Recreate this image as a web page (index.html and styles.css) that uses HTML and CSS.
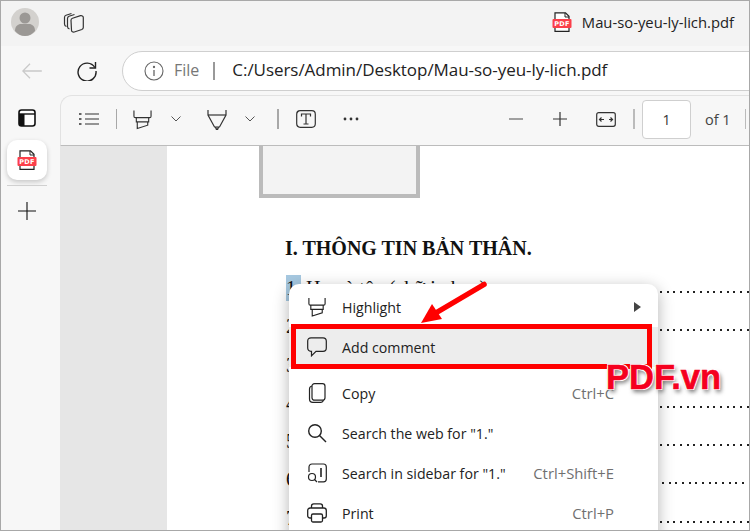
FILE: index.html
```html
<!DOCTYPE html>
<html lang="en">
<head>
    <meta charset="UTF-8">
    <meta name="viewport" content="width=device-width, initial-scale=1.0">
    <title>Mau-so-yeu-ly-lich.pdf</title>
    <link rel="stylesheet" href="styles.css">
</head>
<body>
<div class="window">
    <!-- title bar -->
    <div class="titlebar">
        <svg class="avatar" viewBox="0 0 28 28">
            <circle cx="14" cy="14" r="14" fill="#d3d1ce"/>
            <circle cx="14" cy="10" r="5.5" fill="#9b9895"/>
            <path d="M4 23c0-5 3-7 6-7h8c3 0 6 2 6 7-2.500 3-6 5-10 5s-7.500-2-10-5z" fill="#9b9895"/>
        </svg>
        <svg class="tabs-icon" viewBox="0 0 22 22" fill="none" stroke="#333" stroke-width="1.200">
            <path d="M3.500 15.500c-1.500-.5-2-1.500-2-2.500V6.500c0-1 .5-2 1.500-2.300L8.500 2.500"/>
            <path d="M6.500 18c-1.500-.5-2-1.500-2-2.500V7.500c0-1 .6-1.800 1.500-2.200l5.500-1.800"/>
            <path d="M8 9.200c0-1 .6-1.700 1.500-2l8-2.500c1.200-.3 2.800.3 2.800 1.800v10c0 1-.6 1.600-1.500 2l-7.500 2.500c-1.400.4-2.800-.3-2.800-1.800z"/>
        </svg>
        <div class="tab-title">
            <svg class="pdf-icon" viewBox="0 0 20 20">
                <path d="M3 19.300V.8h10.500l3.500 3.500v15z" fill="#fff" stroke="#222" stroke-width="1.200"/>
                <path d="M13 1v4h4" fill="none" stroke="#222"/>
                <rect x="0.500" y="7" width="19" height="9" rx="1" fill="#fb3f4a"/>
                <text x="10" y="14" class="pdf-icon-text">PDF</text>
            </svg>
            <span>Mau-so-yeu-ly-lich.pdf</span>
        </div>
    </div>

    <!-- address row -->
    <div class="navbar">
        <svg class="back" viewBox="0 0 20 16" fill="none" stroke="#c9c9c9" stroke-width="1.300">
            <path d="M.8 8h19M8 .8.800 8 8 15.200"/>
        </svg>
        <svg class="reload" viewBox="0 0 20 20" fill="none" stroke="#222" stroke-width="1.400">
            <path d="M17.800 6.500A9 9 0 1 0 19 10"/>
            <path d="M18.500 1v6h-6"/>
        </svg>
        <div class="address">
            <svg class="info" viewBox="0 0 20 20" fill="none" stroke="#666" stroke-width="1.100">
                <circle cx="10" cy="10" r="9"/>
                <path d="M10 9v6" stroke-width="1.300"/>
                <circle cx="10" cy="6" r=".6" fill="#666"/>
            </svg>
            <span class="scheme">File</span>
            <span class="address-sep"></span>
            <span class="url">C:/Users/Admin/Desktop/Mau-so-yeu-ly-lich.pdf</span>
        </div>
    </div>

    <div class="main">
        <!-- vertical tabs -->
        <div class="sidebar">
            <svg class="panel-icon" viewBox="0 0 18 18">
                <rect x="1" y="1" width="16" height="16" rx="2.500" fill="#fff" stroke="#111" stroke-width="1.600"/>
                <path d="M1 5h16" stroke="#111" stroke-width="1.400"/>
                <rect x="1" y="5" width="5.500" height="12" fill="#111"/>
            </svg>
            <div class="tab-card">
                <svg class="pdf-icon" viewBox="0 0 20 20">
                    <path d="M3 19.300V.8h10.500l3.500 3.500v15z" fill="#fff" stroke="#222" stroke-width="1.200"/>
                    <path d="M13 1v4h4" fill="none" stroke="#222"/>
                    <rect x="0.500" y="7" width="19" height="9" rx="1" fill="#fb3f4a"/>
                    <text x="10" y="14" class="pdf-icon-text">PDF</text>
                </svg>
            </div>
            <div class="sidebar-sep"></div>
            <svg class="plus-icon" viewBox="0 0 18 18" stroke="#111" stroke-width="1.100">
                <path d="M9 0v18M0 9h18"/>
            </svg>
        </div>

        <div class="content">
            <!-- pdf toolbar -->
            <div class="toolbar">
                <svg class="tool list-icon" viewBox="0 0 20 14" stroke="#333" stroke-width="1.200">
                    <path d="M6 2h14M6 7h14M6 12h14"/>
                    <path d="M0 2h2.500M0 7h2.500M0 12h2.500" stroke-width="1.600"/>
                </svg>
                <span class="tool-sep sep-a"></span>
                <svg class="tool marker-icon" viewBox="0 0 20 21" fill="none" stroke="#333" stroke-width="1.200">
                    <path d="M1 1v6c0 1 .5 1.500 1.500 1.500h15c1 0 1.500-.5 1.500-1.500V1"/>
                    <path d="M3.500 8.500V13h13V8.500"/>
                    <path d="M4.500 13v7l11-3.500V13"/>
                </svg>
                <svg class="tool chevron chevron-a" viewBox="0 0 10 6" fill="none" stroke="#555" stroke-width="1">
                    <path d="M.5.500 5 5 9.500.500"/>
                </svg>
                <svg class="tool pen-icon" viewBox="0 0 20 21" fill="none" stroke="#333" stroke-width="1.200">
                    <path d="M1 1v5l6.500 12h5L19 6V1"/>
                    <path d="M1 6h18"/>
                    <path d="M8.500 18l1 2.500h1l1-2.500" stroke-width="1.400"/>
                </svg>
                <svg class="tool chevron chevron-b" viewBox="0 0 10 6" fill="none" stroke="#555" stroke-width="1">
                    <path d="M.5.500 5 5 9.500.500"/>
                </svg>
                <span class="tool-sep sep-b"></span>
                <svg class="tool text-icon" viewBox="0 0 20 18" fill="none" stroke="#333" stroke-width="1.200">
                    <rect x=".7" y=".7" width="18.600" height="16.600" rx="3.500"/>
                    <path d="M5.500 6.500V4h9v2.500M10 4v10M7.500 14h5"/>
                </svg>
                <svg class="tool dots-icon" viewBox="0 0 16 4" fill="#333">
                    <circle cx="2" cy="2" r="1.400"/><circle cx="8" cy="2" r="1.400"/><circle cx="14" cy="2" r="1.400"/>
                </svg>
                <svg class="tool minus-icon" viewBox="0 0 14 2" stroke="#666" stroke-width="1.200">
                    <path d="M0 1h14"/>
                </svg>
                <svg class="tool zoomin-icon" viewBox="0 0 14 14" stroke="#333" stroke-width="1.200">
                    <path d="M7 0v14M0 7h14"/>
                </svg>
                <svg class="tool fit-icon" viewBox="0 0 20 15" fill="none" stroke="#333" stroke-width="1.200">
                    <rect x=".7" y=".7" width="18.600" height="13.600" rx="2"/>
                    <path d="M3.500 7.500h4.500M13 7.500h4M5.500 5.500l-2 2 2 2M14.500 5.500l2 2-2 2"/>
                </svg>
                <span class="tool-sep sep-c"></span>
                <div class="page-input">1</div>
                <span class="page-total">of 1</span>
                <span class="tool-sep sep-d"></span>
            </div>

            <div class="viewer">
                <div class="viewer-gutter"></div>
                <div class="page">
                    <div class="photo-box"></div>
                    <h2 class="section-title">I. THÔNG TIN BẢN THÂN.</h2>
                    <div class="row"><span><span class="selected">1.</span> Họ và tên (chữ in hoa)</span><span class="leader"></span></div>
                    <div class="row"><span>2. Ngày sinh</span><span class="leader"></span></div>
                    <div class="row"><span>3. Giới tính</span></div>
                    <div class="row"><span>4. Nơi sinh</span><span class="leader"></span></div>
                    <div class="row"><span>5. Quê quán</span><span class="leader"></span></div>
                    <div class="row"><span>6. Dân tộc</span><span class="leader shifted"></span></div>
                    <div class="row"><span>7. Tôn giáo</span><span class="leader"></span></div>
                </div>
            </div>
        </div>
    </div>

    <!-- right click menu -->
    <div class="context-menu">
        <div class="menu-item">
            <svg class="menu-icon" viewBox="0 0 20 21" fill="none" stroke="#222" stroke-width="1.200">
                <path d="M1.500 1v6c0 1 .5 1.500 1.500 1.500h14c1 0 1.500-.5 1.500-1.500V1"/>
                <path d="M3.500 8.500V13h13V8.500"/>
                <path d="M5 13v7l10.500-3.500V13"/>
            </svg>
            <span class="menu-label">Highlight</span>
            <svg class="submenu-arrow" viewBox="0 0 7 10" fill="#444"><path d="M0 0l7 5-7 5z"/></svg>
        </div>
        <div class="menu-item hovered">
            <svg class="menu-icon" viewBox="0 0 20 20" fill="none" stroke="#222" stroke-width="1.200">
                <path d="M4 .8h12c2 0 3.300 1.300 3.300 3.200v7c0 2-1.300 3.300-3.300 3.300H9l-4.500 4.500v-4.500H4C2 14.300.7 13 .7 11V4C.7 2.100 2 .8 4 .8z"/>
            </svg>
            <span class="menu-label">Add comment</span>
        </div>
        <div class="menu-gap"></div>
        <div class="menu-item">
            <svg class="menu-icon" viewBox="0 0 20 20" fill="none" stroke="#222" stroke-width="1.200">
                <rect x="5" y=".7" width="13" height="16.500" rx="2.500"/>
                <path d="M5 3C3 3.500 2.500 4.500 2.500 6v10c0 2 1.500 3.300 3.300 3.300H14c1 0 2-.5 2.500-2"/>
            </svg>
            <span class="menu-label">Copy</span>
            <span class="shortcut">Ctrl+C</span>
        </div>
        <div class="menu-item">
            <svg class="menu-icon" viewBox="0 0 20 20" fill="none" stroke="#222" stroke-width="1.400">
                <circle cx="8" cy="8" r="6.300"/>
                <path d="M12.500 12.500l6.500 6.500"/>
            </svg>
            <span class="menu-label">Search the web for "1."</span>
        </div>
        <div class="menu-item">
            <svg class="menu-icon" viewBox="0 0 20 20" fill="none" stroke="#222" stroke-width="1.200">
                <path d="M2 9V4c0-1.800 1.200-3 3-3h11.500c1.500 0 2.800 1.200 2.800 3v12c0 1.500-1.300 2.800-2.800 2.800H11"/>
                <path d="M14 5v9" stroke-width="1.600"/>
                <circle cx="5" cy="14" r="3.500"/>
                <path d="M7.500 16.500L10 19"/>
            </svg>
            <span class="menu-label">Search in sidebar for "1."</span>
            <span class="shortcut">Ctrl+Shift+E</span>
        </div>
        <div class="menu-item">
            <svg class="menu-icon" viewBox="0 0 20 20" fill="none" stroke="#222" stroke-width="1.300">
                <path d="M4.500 5V3c0-1.300 1-2.200 2.200-2.200h6.600c1.200 0 2.200.9 2.200 2.200v2"/>
                <path d="M4.500 15H3c-1.300 0-2.300-1-2.300-2.300V7.500C.7 6 1.700 5 3.200 5h13.600c1.500 0 2.500 1 2.500 2.500v5.200c0 1.300-1 2.300-2.300 2.300h-1.500"/>
                <rect x="4.500" y="11" width="11" height="8" rx="1.500"/>
            </svg>
            <span class="menu-label">Print</span>
            <span class="shortcut">Ctrl+P</span>
        </div>
    </div>

    <!-- red annotations on top of the screenshot -->
    <div class="red-box"></div>
    <svg class="red-arrow" viewBox="0 0 70 44">
        <path d="M64 3.500 14 33" fill="none" stroke="#f00" stroke-width="5.500" stroke-linecap="round"/>
        <path d="M1 42l11-19 10 15z" fill="#f00"/>
    </svg>
    <div class="watermark">PDF.vn</div>
</div>
</body>
</html>
```

FILE: styles.css
```css
* {
    margin: 0;
    padding: 0;
    box-sizing: border-box;
}
body {
    width: 750px;
    height: 532px;
    overflow: hidden;
    background-color: #ffffff;
    font-family: "Open Sans", "Noto Sans", Arial, sans-serif;
}
svg {
    display: block;
    flex: none;
}
.window {
    position: relative;
    width: 750px;
    height: 531px;
    border: 1px solid #a8a8a8;
    overflow: hidden;
    background-color: #f7f7f7;
    display: flex;
    flex-direction: column;
}

/* title bar */
.titlebar {
    height: 45px;
    flex: none;
    background-color: #f3f3f3;
    display: flex;
    align-items: center;
    padding-left: 10px;
}
.avatar {
    width: 28px;
    height: 28px;
    margin-top: -3px;
}
.tabs-icon {
    width: 22px;
    height: 22px;
    margin-left: 24px;
    margin-top: -3px;
}
.tab-title {
    margin-left: auto;
    padding-right: 15px;
    display: flex;
    align-items: center;
    gap: 10px;
    font-size: 14.800px;
    color: #222;
    margin-top: -3px;
}
.pdf-icon {
    width: 20px;
    height: 20px;
}
.pdf-icon-text {
    font-family: "DejaVu Sans", sans-serif;
    font-size: 6.500px;
    font-weight: bold;
    fill: #ffffff;
    text-anchor: middle;
    letter-spacing: .3px;
}

/* address row */
.navbar {
    height: 49px;
    flex: none;
    display: flex;
    align-items: center;
    padding-left: 21px;
    background-color: #f7f7f7;
}
.back {
    width: 20px;
    height: 16px;
}
.reload {
    width: 20px;
    height: 20px;
    margin-left: 35px;
}
.address {
    margin-left: 25px;
    flex: 1;
    height: 40px;
    margin-right: -30px;
    background-color: #ffffff;
    border: 1px solid #cfcfcf;
    border-radius: 20px;
    display: flex;
    align-items: center;
    padding-left: 21px;
}
.info {
    width: 20px;
    height: 20px;
}
.scheme {
    margin-left: 10px;
    font-size: 16px;
    line-height: 20px;
    color: #777;
    margin-top: -2px;
}
.address-sep {
    width: 2px;
    height: 18px;
    background-color: #999;
    margin-left: 14px;
}
.url {
    margin-left: 17px;
    font-size: 17px;
    line-height: 20px;
    letter-spacing: -0.050px;
    color: #222;
    white-space: nowrap;
    margin-top: -2px;
}

.main {
    flex: 1;
    display: flex;
    min-height: 0;
}

/* vertical tabs */
.sidebar {
    width: 59px;
    flex: none;
    display: flex;
    flex-direction: column;
    align-items: center;
    padding-top: 14px;
    padding-right: 8px;
}
.panel-icon {
    width: 18px;
    height: 18px;
}
.tab-card {
    width: 40px;
    height: 40px;
    margin-top: 13px;
    background-color: #ffffff;
    border-radius: 10px;
    box-shadow: 0 2px 5px rgba(0, 0, 0, 0.2);
    display: flex;
    align-items: center;
    justify-content: center;
}
.sidebar-sep {
    width: 40px;
    height: 1px;
    margin-top: 5px;
    background-color: #d0d0d0;
}
.plus-icon {
    width: 18px;
    height: 18px;
    margin-top: 16px;
}

.content {
    flex: 1;
    min-width: 0;
    display: flex;
    flex-direction: column;
}

/* pdf toolbar */
.toolbar {
    height: 51px;
    flex: none;
    display: flex;
    align-items: center;
    background-color: #f7f7f7;
    border-top: 1px solid #e2e2e2;
    border-left: 1px solid #e2e2e2;
    border-bottom: 1px solid #bcbcbc;
    border-top-left-radius: 12px;
    padding-left: 18px;
}
.tool {
    margin-top: -3px;
}
.list-icon { width: 20px; height: 14px; }
.tool-sep {
    flex: none;
    width: 1px;
    height: 20px;
    margin-top: -3px;
    background-color: #a8a8a8;
}
.sep-a { margin-left: 17px; }
.marker-icon { width: 19px; height: 21px; margin-left: 16px; }
.chevron { width: 10px; height: 6px; }
.chevron-a { margin-left: 19px; }
.pen-icon { width: 20px; height: 21px; margin-left: 26px; }
.chevron-b { margin-left: 18px; }
.sep-b { margin-left: 22px; width: 2px; }
.text-icon { width: 20px; height: 18px; margin-left: 17px; }
.dots-icon { width: 16px; height: 4px; margin-left: 27px; }
.minus-icon { width: 14px; height: 2px; margin-left: 150px; }
.zoomin-icon { width: 14px; height: 14px; margin-left: 30px; }
.fit-icon { width: 20px; height: 15px; margin-left: 29px; }
.sep-c { margin-left: 17px; width: 2px; background-color: #bbb; }
.page-input {
    width: 49px;
    height: 39px;
    flex: none;
    margin-left: 7px;
    margin-top: -3px;
    background-color: #ffffff;
    border: 1px solid #cfcfcf;
    border-radius: 4px;
    display: flex;
    align-items: center;
    justify-content: center;
    font-size: 14px;
    color: #333;
}
.page-total {
    margin-left: 14px;
    margin-top: -3px;
    font-size: 14.500px;
    color: #444;
    white-space: nowrap;
}
.sep-d { margin-left: 14px; background-color: #bbb; }

/* document */
.viewer {
    flex: 1;
    display: flex;
    min-height: 0;
}
.viewer-gutter {
    width: 107px;
    flex: none;
    background-color: #e6e6e6;
}
.page {
    flex: 1;
    min-width: 0;
    overflow: hidden;
    background-color: #ffffff;
    padding-left: 119px;
    font-family: "Liberation Serif", "Times New Roman", serif;
    color: #111;
}
.photo-box {
    width: 161px;
    height: 52px;
    margin-left: -27px;
    background-color: #f3f3f3;
    border: 4px solid #bbbbbb;
    border-top: none;
}
.section-title {
    margin-top: 38px;
    margin-left: -1px;
    font-size: 20px;
    line-height: 24px;
    font-weight: bold;
    white-space: nowrap;
}
.row {
    display: grid;
    grid-template-columns: 371px 1fr;
    font-size: 20px;
    line-height: 38.300px;
    height: 38.300px;
    white-space: nowrap;
}
.section-title + .row {
    margin-top: 9px;
}
.selected {
    background-color: #a6c8e0;
    padding: 2px 0;
}
/* dotted fill after each label */
.leader {
    background-image: repeating-linear-gradient(90deg, #222 0, #222 2px, transparent 2px, transparent 6.670px);
    background-size: 100% 2px;
    background-repeat: no-repeat;
    background-position: 3px 22px;
}
.leader.shifted {
    background-position: 5px 22px;
}

/* right click menu */
.context-menu {
    position: absolute;
    left: 288px;
    top: 283px;
    width: 369px;
    height: 270px;
    background-color: #ffffff;
    border-radius: 10px;
    box-shadow: 0 4px 16px rgba(0, 0, 0, 0.3);
    padding-top: 3px;
}
.menu-item {
    height: 40px;
    display: flex;
    align-items: center;
    padding-left: 18px;
    padding-right: 44px;
    font-size: 14.200px;
    color: #222;
}
.menu-item.hovered {
    background-color: #ededed;
}
.menu-gap {
    height: 6px;
}
.menu-icon {
    width: 20px;
    height: 20px;
}
.menu-label {
    margin-left: 15px;
    white-space: nowrap;
}
.shortcut {
    margin-left: auto;
    font-size: 14.800px;
    color: #707070;
    white-space: nowrap;
}
.submenu-arrow {
    width: 7px;
    height: 10px;
    margin-left: auto;
    margin-right: -27px;
}

/* annotations */
.red-box {
    position: absolute;
    left: 290px;
    top: 323px;
    width: 361px;
    height: 45px;
    border: 5px solid #ff0000;
}
.red-arrow {
    position: absolute;
    left: 419px;
    top: 280px;
    width: 70px;
    height: 44px;
}
.watermark {
    position: absolute;
    left: 605px;
    top: 356px;
    font-family: "Liberation Sans", Arial, sans-serif;
    font-size: 34.500px;
    line-height: 40px;
    font-weight: bold;
    color: #f5001e;
    -webkit-text-stroke: 0.6px #f5001e;
    text-shadow: -1px -1px 0 #fff, 1px -1px 0 #fff, -1px 1px 0 #fff, 1px 1px 0 #fff, 0 -1px 0 #fff, 0 1px 0 #fff, 2px 3px 4px rgba(0, 0, 0, 0.55);
}
```
